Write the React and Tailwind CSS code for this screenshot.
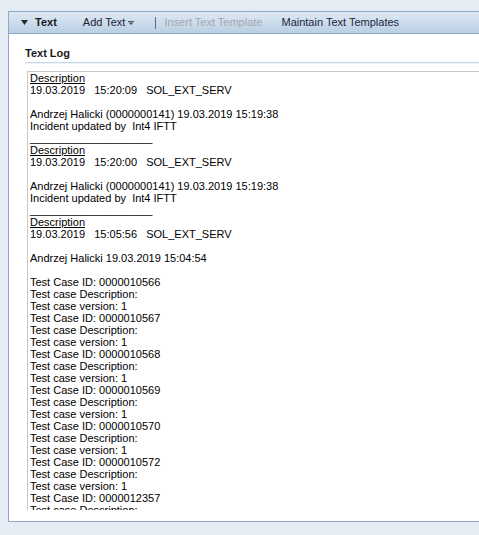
import React from 'react';

const sep = '____________________';

const entries = [
  { time: '15:20:09', who: 'Andrzej Halicki (0000000141) 19.03.2019 15:19:38', note: 'Incident updated by  Int4 IFTT' },
  { time: '15:20:00', who: 'Andrzej Halicki (0000000141) 19.03.2019 15:19:38', note: 'Incident updated by  Int4 IFTT' },
];

const testCases = ['0000010566', '0000010567', '0000010568', '0000010569', '0000010570', '0000010572', '0000012357'];

function Line({ children, u }) {
  return <div className={'h-[12px] leading-[12px] whitespace-pre ' + (u ? 'underline' : '')}>{children || ' '}</div>;
}

export default function App() {
  return (
    <div className="w-[479px] h-[535px] bg-[#e5ecf4] overflow-hidden pt-[11px] pl-[8px] text-[11px] text-black" style={{ fontFamily: '"Liberation Sans", Arial, sans-serif' }}>
      <div className="w-[490px] h-[511px] bg-white border border-[#8ea7c6] flex flex-col">
        {/* toolbar */}
        <div className="h-[22px] shrink-0 flex items-center bg-gradient-to-b from-[#dfe9f4] to-[#b9cfe3] border-b border-[#8ea7c6]">
          <svg width="7" height="5" viewBox="0 0 7 5" className="ml-[12px] mr-[7px]"><path d="M0 0h7L3.5 5z" fill="#2a2a2a" /></svg>
          <span className="font-bold text-[#1a1a1a]">Text</span>
          <span className="ml-[26px] text-[#1c2333]">Add Text</span>
          <svg width="6" height="4" viewBox="0 0 6 4" className="ml-[3px] mt-[1px]"><path d="M0 0h6v1H0zM0.5 1.5h5L3 4z" fill="#555" /></svg>
          <div className="ml-[21px] w-[1px] h-[12px] bg-[#5a6b80]" />
          <span className="ml-[8px] text-[#a3a8ae]">Insert Text Template</span>
          <span className="ml-[19px] text-[#1b2540]">Maintain Text Templates</span>
        </div>
        {/* content */}
        <div className="pl-[16px] pt-[12px] flex flex-col flex-1 min-h-0">
          <div className="font-bold leading-[14px] text-[#1a1a1a]">Text Log</div>
          <div className="mt-[2px] h-[2px] border-t border-[#c6d7e9] bg-[#edf3f9]" />
          <div className="mt-[7px] ml-[2px] h-[439px] border-t border-l border-[#c8c8c8] pl-[2px] overflow-hidden">
            {entries.map((e, i) => (
              <React.Fragment key={i}>
                <Line u>Description</Line>
                <Line>{'19.03.2019   ' + e.time + '   SOL_EXT_SERV'}</Line>
                <Line />
                <Line>{e.who}</Line>
                <Line>{e.note}</Line>
                <Line>{sep}</Line>
              </React.Fragment>
            ))}
            <Line u>Description</Line>
            <Line>{'19.03.2019   15:05:56   SOL_EXT_SERV'}</Line>
            <Line />
            <Line>Andrzej Halicki 19.03.2019 15:04:54</Line>
            <Line />
            {testCases.map((id) => (
              <React.Fragment key={id}>
                <Line>{'Test Case ID: ' + id}</Line>
                <Line>Test case Description:</Line>
                <Line>Test case version: 1</Line>
              </React.Fragment>
            ))}
          </div>
        </div>
      </div>
    </div>
  );
}
